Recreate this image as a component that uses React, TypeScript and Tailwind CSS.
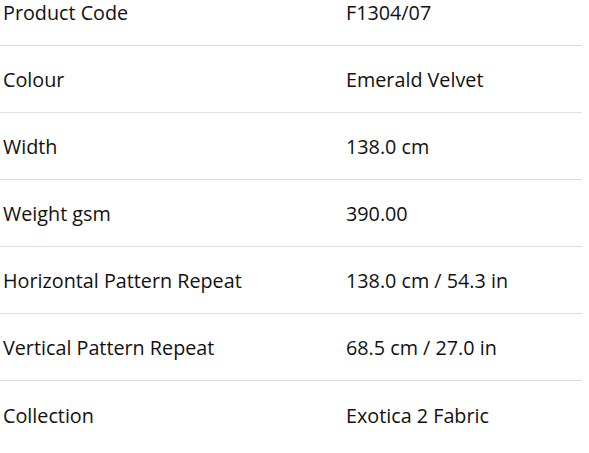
import React from "react";

const rows: [string, string][] = [
  ["Product Code", "F1304/07"],
  ["Colour", "Emerald Velvet"],
  ["Width", "138.0 cm"],
  ["Weight gsm", "390.00"],
  ["Horizontal Pattern Repeat", "138.0 cm / 54.3 in"],
  ["Vertical Pattern Repeat", "68.5 cm / 27.0 in"],
  ["Collection", "Exotica 2 Fabric"],
];

export default function App() {
  return (
    <div className="h-[453px] w-[589px] overflow-hidden bg-white">
      <div
        className="mt-[-21px] w-[582px] text-[19.75px] leading-none text-[#111]"
        style={{ fontFamily: "'Open Sans', 'Noto Sans', sans-serif" }}
      >
        {rows.map(([k, v], i) => (
          <div
            key={k}
            className={`flex h-[67px] items-center pl-[3px] pt-[2px] ${
              i < rows.length - 1 ? "border-b border-[#dedede]" : ""
            }`}
          >
            <div className="w-[343px]">{k}</div>
            <div>{v}</div>
          </div>
        ))}
      </div>
    </div>
  );
}
